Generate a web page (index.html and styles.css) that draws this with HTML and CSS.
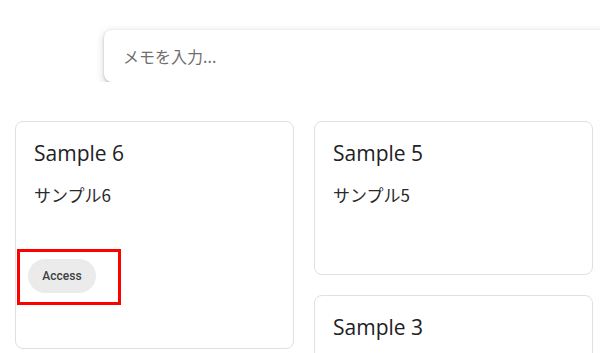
FILE: index.html
```html
<!DOCTYPE html>
<html lang="ja">
<head>
    <meta charset="UTF-8">
    <meta name="viewport" content="width=device-width, initial-scale=1.0">
    <title>Notes</title>
    <link rel="stylesheet" href="styles.css">
</head>
<body>
    <header class="search-bar">
        <input class="memo-input" type="text" placeholder="メモを入力...">
    </header>
    <main class="notes">
        <div class="note-column">
            <div class="note">
                <h2 class="note-title">Sample 6</h2>
                <p class="note-text">サンプル6</p>
                <div class="chips">
                    <span class="chip">Access<span class="highlight"></span></span>
                </div>
            </div>
        </div>
        <div class="note-column">
            <div class="note">
                <h2 class="note-title">Sample 5</h2>
                <p class="note-text">サンプル5</p>
            </div>
            <div class="note">
                <h2 class="note-title">Sample 3</h2>
            </div>
        </div>
    </main>
</body>
</html>
```

FILE: styles.css
```css
body {
    margin: 0;
    padding: 0;
    background-color: #fff;
    font-family: Roboto, "Noto Sans CJK JP", sans-serif;
    color: #202124;
    overflow: hidden;
    height: 353px;
}

.search-bar {
    display: flex;
    padding: 30px 0 0 104px;
    overflow: hidden;
}

.memo-input {
    flex: none;
    box-sizing: border-box;
    width: 640px;
    height: 52px;
    border: none;
    border-radius: 8px;
    padding: 0 19px;
    font-family: "Noto Sans CJK JP", sans-serif;
    font-size: 16px;
    color: #202124;
    background-color: #fff;
    box-shadow: 0 1px 2px rgba(60, 64, 67, 0.3), 0 2px 6px 2px rgba(60, 64, 67, 0.15);
    outline: none;
}

.memo-input::placeholder {
    color: #6f6f6f;
}

.notes {
    display: flex;
    gap: 20px;
    padding: 0 0 0 15px;
    margin-top: 39px;
}

.note-column {
    display: flex;
    flex-direction: column;
    gap: 20px;
    flex: none;
    width: 279px;
}

.note {
    box-sizing: border-box;
    border: 1px solid #e0e0e0;
    border-radius: 8px;
    padding: 17px 18px 55px;
    background-color: #fff;
}

.note-title {
    margin: 0 0 15px 0;
    font-family: "Open Sans", sans-serif;
    font-size: 21px;
    font-weight: 400;
    line-height: 28px;
}

.note-text {
    margin: 0 0 11px 0;
    font-family: "Noto Sans CJK JP", sans-serif;
    font-size: 17px;
    font-weight: 400;
    line-height: 26px;
    color: #2a2a2a;
}

.chips {
    display: flex;
    margin: 51px 0 0 -6px;
}

.chip {
    position: relative;
    display: inline-flex;
    align-items: center;
    justify-content: center;
    width: 68px;
    height: 34px;
    border-radius: 17px;
    background-color: #ebebeb;
    font-family: Roboto, sans-serif;
    font-size: 12px;
    font-weight: 500;
    color: #3c4043;
}

.highlight {
    position: absolute;
    left: -11px;
    top: -10px;
    width: 98px;
    height: 50px;
    border: 3px solid #ff0000;
}
```
